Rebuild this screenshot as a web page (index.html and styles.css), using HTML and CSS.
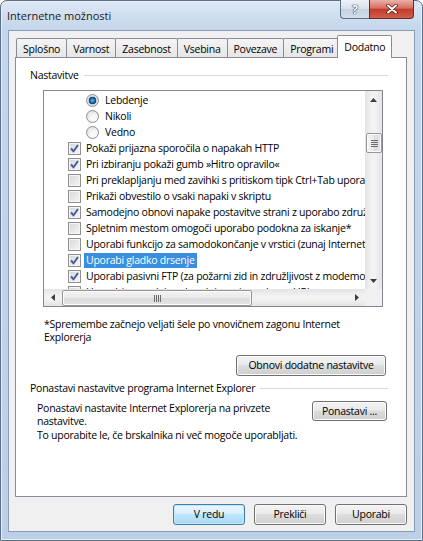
FILE: index.html
```html
<!DOCTYPE html>
<html lang="sl">
<head>
  <meta charset="UTF-8">
  <title>Internetne možnosti</title>
  <link rel="stylesheet" href="styles.css">
</head>
<body>
  <div class="window">
    <div class="titlebar">
      <span class="title">Internetne možnosti</span>
      <div class="caption-btns">
        <span class="cap-btn help">?</span>
        <span class="cap-btn close">
          <svg width="14" height="10" viewBox="0 0 14 10">
            <path d="M3 1.5 L11 8.5 M11 1.5 L3 8.5" stroke="#5a1e18" stroke-width="3.6" stroke-linecap="round"/>
            <path d="M3 1.5 L11 8.5 M11 1.5 L3 8.5" stroke="#fff" stroke-width="2" stroke-linecap="round"/>
          </svg>
        </span>
      </div>
    </div>

    <div class="client">
      <div class="tabs">
        <span class="tab">Splošno</span>
        <span class="tab">Varnost</span>
        <span class="tab">Zasebnost</span>
        <span class="tab">Vsebina</span>
        <span class="tab">Povezave</span>
        <span class="tab">Programi</span>
        <span class="tab tab-active">Dodatno</span>
      </div>

      <div class="panel">
        <div class="group-head">Nastavitve</div>

        <div class="listbox">
          <div class="list-view">
            <div class="row row-radio"><span class="radio radio-on"></span><span class="label">Lebdenje</span></div>
            <div class="row row-radio"><span class="radio"></span><span class="label">Nikoli</span></div>
            <div class="row row-radio"><span class="radio"></span><span class="label">Vedno</span></div>
            <div class="row"><span class="check check-on"></span><span class="label">Pokaži prijazna sporočila o napakah HTTP</span></div>
            <div class="row"><span class="check check-on"></span><span class="label">Pri izbiranju pokaži gumb »Hitro opravilo«</span></div>
            <div class="row"><span class="check"></span><span class="label">Pri preklapljanju med zavihki s pritiskom tipk Ctrl+Tab uporabi zadnji vrstni red</span></div>
            <div class="row"><span class="check"></span><span class="label">Prikaži obvestilo o vsaki napaki v skriptu</span></div>
            <div class="row"><span class="check check-on"></span><span class="label">Samodejno obnovi napake postavitve strani z uporabo združljivostnega pogleda</span></div>
            <div class="row"><span class="check"></span><span class="label">Spletnim mestom omogoči uporabo podokna za iskanje*</span></div>
            <div class="row"><span class="check"></span><span class="label">Uporabi funkcijo za samodokončanje v vrstici (zunaj Internet Explorerja)</span></div>
            <div class="row"><span class="check check-on"></span><span class="label label-selected">Uporabi gladko drsenje</span></div>
            <div class="row"><span class="check check-on"></span><span class="label">Uporabi pasivni FTP (za požarni zid in združljivost z modemom DSL)</span></div>
            <div class="row"><span class="check"></span><span class="label">Uporabi samodejno dopolnjevanje naslovov URL</span></div>
          </div>

          <div class="vscroll">
            <span class="sb-arrow"><svg width="7" height="4" viewBox="0 0 7 4"><path d="M0 4 L3.5 0 L7 4Z" fill="#3c3c3c"/></svg></span>
            <div class="sb-track">
              <span class="vthumb"><span class="grip"></span></span>
            </div>
            <span class="sb-arrow"><svg width="7" height="4" viewBox="0 0 7 4"><path d="M0 0 L7 0 L3.5 4Z" fill="#3c3c3c"/></svg></span>
          </div>

          <div class="hscroll">
            <span class="sb-arrow"><svg width="4" height="7" viewBox="0 0 4 7"><path d="M4 0 L4 7 L0 3.5Z" fill="#3c3c3c"/></svg></span>
            <div class="sb-track sb-track-h">
              <span class="hthumb"><span class="grip grip-h"></span></span>
            </div>
            <span class="sb-arrow"><svg width="4" height="7" viewBox="0 0 4 7"><path d="M0 0 L4 3.5 L0 7Z" fill="#3c3c3c"/></svg></span>
          </div>

          <div class="sb-corner"></div>
        </div>

        <p class="note">*Spremembe začnejo veljati šele po vnovičnem zagonu Internet<br>Explorerja</p>

        <button class="btn btn-restore">Obnovi dodatne nastavitve</button>

        <div class="group-head group-reset">Ponastavi nastavitve programa Internet Explorer</div>

        <div class="reset-row">
          <p class="reset-text">Ponastavi nastavite Internet Explorerja na privzete<br>nastavitve.</p>
          <button class="btn btn-reset">Ponastavi ...</button>
        </div>
        <p class="reset-hint">To uporabite le, če brskalnika ni več mogoče uporabljati.</p>
      </div>

      <div class="dialog-btns">
        <button class="btn btn-default">V redu</button>
        <button class="btn">Prekliči</button>
        <button class="btn">Uporabi</button>
      </div>
    </div>
  </div>
</body>
</html>
```

FILE: styles.css
```css
/* Windows 7 style dialog */
* {
  box-sizing: border-box;
}
body {
  margin: 0;
  font-family: "Open Sans", "Noto Sans", sans-serif;
  font-size: 10.5px;
  line-height: 13px;
  letter-spacing: -0.25px;
  color: #000;
}
p {
  margin: 0;
}

.window {
  width: 423px;
  height: 541px;
  display: flex;
  flex-direction: column;
  padding: 0 7px 8px;
  border: 1px solid #5b6f8a;
  border-radius: 7px 7px 0 0;
  background: linear-gradient(#dde8f5, #c4d6eb 28px, #bccfe7);
  box-shadow: inset 0 0 0 1px #e6eef8;
}

/* title bar */
.titlebar {
  height: 29px;
  display: flex;
  align-items: flex-start;
}
.title {
  margin: 8px 0 0 -1px;
  font-size: 11px;
  letter-spacing: 0;
  color: #1a1a1a;
}
.caption-btns {
  display: flex;
  margin: -1px 1px 0 auto;
}
.cap-btn {
  height: 19px;
  display: flex;
  align-items: center;
  justify-content: center;
  border: 1px solid #5d6d82;
  border-top: none;
}
.help {
  width: 29px;
  border-right: none;
  border-radius: 0 0 0 4px;
  background: linear-gradient(#eef2f8, #d8e0eb 50%, #c6d1e0 50%, #d3deeb);
  color: #fff;
  font-weight: bold;
  font-size: 12px;
  text-shadow: 0 0 1px #2d3a4c, 0 0 1px #2d3a4c, 0 0 1px #2d3a4c;
}
.close {
  width: 45px;
  border-color: #6b2a24;
  border-radius: 0 0 4px 0;
  background: linear-gradient(#eab1a6, #d86e60 45%, #c33a2b 52%, #d0604c);
}

/* client area */
.client {
  flex: 1;
  display: flex;
  flex-direction: column;
  padding: 4px 7px 0 6px;
  background: #f0f0f0;
  border: 1px solid #8a9db6;
}

.tabs {
  display: flex;
  align-items: flex-end;
  padding-left: 1px;
}
.tab {
  height: 19px;
  padding: 4px 6px 0;
  margin-right: -1px;
  border: 1px solid #898c95;
  border-bottom: none;
  border-radius: 2px 2px 0 0;
  background: linear-gradient(#f4f4f4, #e6e6e6);
}
.tab-active {
  position: relative;
  z-index: 1;
  height: 23px;
  padding-top: 5px;
  margin: 0 -2px -1px;
  background: #fff;
}

.panel {
  height: 440px;
  display: flex;
  flex-direction: column;
  background: #fff;
  border: 1px solid #898c95;
}

.group-head {
  display: flex;
  align-items: center;
  gap: 5px;
  margin: 11px 18px 0 14px;
  white-space: nowrap;
}
.group-head::after {
  content: "";
  flex: 1;
  border-top: 1px solid #d5dadf;
}
.group-reset {
  margin-top: 6px;
}

/* list with checkboxes */
.listbox {
  height: 217px;
  margin: 8px 23px 0 27px;
  border: 1px solid #828790;
  display: grid;
  grid-template-columns: 1fr 17px;
  grid-template-rows: 1fr 17px;
}
.list-view {
  overflow: hidden;
  padding-top: 1px;
}
.row {
  height: 16px;
  display: flex;
  align-items: center;
  padding-left: 24px;
  white-space: nowrap;
}
.row-radio {
  padding-left: 42px;
}
.label {
  margin-left: 3px;
  padding: 1px 2px;
}
.row-radio .label {
  margin-left: 4px;
}
.label-selected {
  background: #3a8ee0;
  color: #fff;
}

.check {
  flex: none;
  width: 13px;
  height: 13px;
  border: 1px solid #8e8f8f;
  background: linear-gradient(135deg, #d3d6db, #f7f7f7);
  box-shadow: inset 0 0 0 1px #f4f4f4;
}
.check-on {
  background:
    url("data:image/svg+xml;utf8,<svg xmlns='http://www.w3.org/2000/svg' width='11' height='11'><path d='M2 5.5 L4.5 8.2 L9 2' fill='none' stroke='%23465a9c' stroke-width='1.9'/></svg>") center / 11px 11px no-repeat,
    linear-gradient(135deg, #d3d6db, #f7f7f7);
}
.radio {
  flex: none;
  width: 13px;
  height: 13px;
  border-radius: 50%;
  border: 1px solid #8e8f8f;
  background: radial-gradient(circle at 60% 65%, #f8f8f8 30%, #d2d4d8);
}
.radio-on {
  background: radial-gradient(circle at 50% 50%, #5fc3e8 0, #1e73b5 2px, #0d3f75 3.5px, #c9ccd1 4px, #eeeeee 6px);
}

/* scroll bars */
.vscroll,
.hscroll {
  display: flex;
  flex-direction: column;
  background: linear-gradient(90deg, #e4e4e4, #f2f2f2 40%, #f2f2f2 60%, #e4e4e4);
}
.hscroll {
  flex-direction: row;
  background: linear-gradient(#e4e4e4, #f2f2f2 40%, #f2f2f2 60%, #e4e4e4);
}
.sb-arrow {
  flex: none;
  width: 17px;
  height: 17px;
  display: flex;
  align-items: center;
  justify-content: center;
}
.sb-track {
  flex: 1;
  padding-top: 25px;
}
.sb-track-h {
  padding: 0 0 0 1px;
}
.vthumb,
.hthumb {
  display: flex;
  align-items: center;
  justify-content: center;
  border: 1px solid #979797;
  border-radius: 2px;
  background: linear-gradient(90deg, #f4f4f4, #e8e8e8 50%, #dcdcdc 50%, #e4e4e4);
  box-shadow: inset 0 0 0 1px #fbfbfb;
}
.vthumb {
  width: 16px;
  height: 20px;
  margin-left: 1px;
}
.hthumb {
  width: 190px;
  height: 16px;
  margin-top: 1px;
  background: linear-gradient(#f4f4f4, #e8e8e8 50%, #dcdcdc 50%, #e4e4e4);
}
.grip {
  width: 7px;
  height: 7px;
  background: repeating-linear-gradient(#6b6b6b 0 1px, transparent 1px 2px);
}
.grip-h {
  width: 7px;
  background: repeating-linear-gradient(90deg, #6b6b6b 0 1px, transparent 1px 2px);
}
.sb-corner {
  background: #f0f0f0;
}

.note {
  margin: 11px 0 0 28px;
}

/* buttons */
.btn {
  height: 21px;
  padding: 0 6px;
  font: inherit;
  letter-spacing: inherit;
  white-space: nowrap;
  color: #000;
  border: 1px solid #707070;
  border-radius: 3px;
  background: linear-gradient(#f2f2f2, #ebebeb 45%, #dddddd 50%, #cfcfcf);
  box-shadow: inset 0 0 0 1px #fbfbfb;
}
.btn-default {
  border-color: #3c7fb1;
  background: linear-gradient(#eaf6fd, #d9f0fc 45%, #bee6fd 50%, #a7d9f5);
  box-shadow: inset 0 0 0 1px #c6e6f7;
}
.btn-restore {
  align-self: flex-end;
  width: 150px;
  margin: 11px 20px 0 0;
}

.reset-row {
  display: flex;
  justify-content: space-between;
  align-items: flex-start;
  margin: 6px 19px 0 21px;
}
.reset-text {
  padding-top: 1px;
}
.btn-reset {
  width: 75px;
  height: 20px;
}
.reset-hint {
  margin: 1px 0 0 21px;
}

.dialog-btns {
  display: flex;
  justify-content: flex-end;
  gap: 9px;
  margin-top: 7px;
}
.dialog-btns .btn {
  width: 72px;
}
```
